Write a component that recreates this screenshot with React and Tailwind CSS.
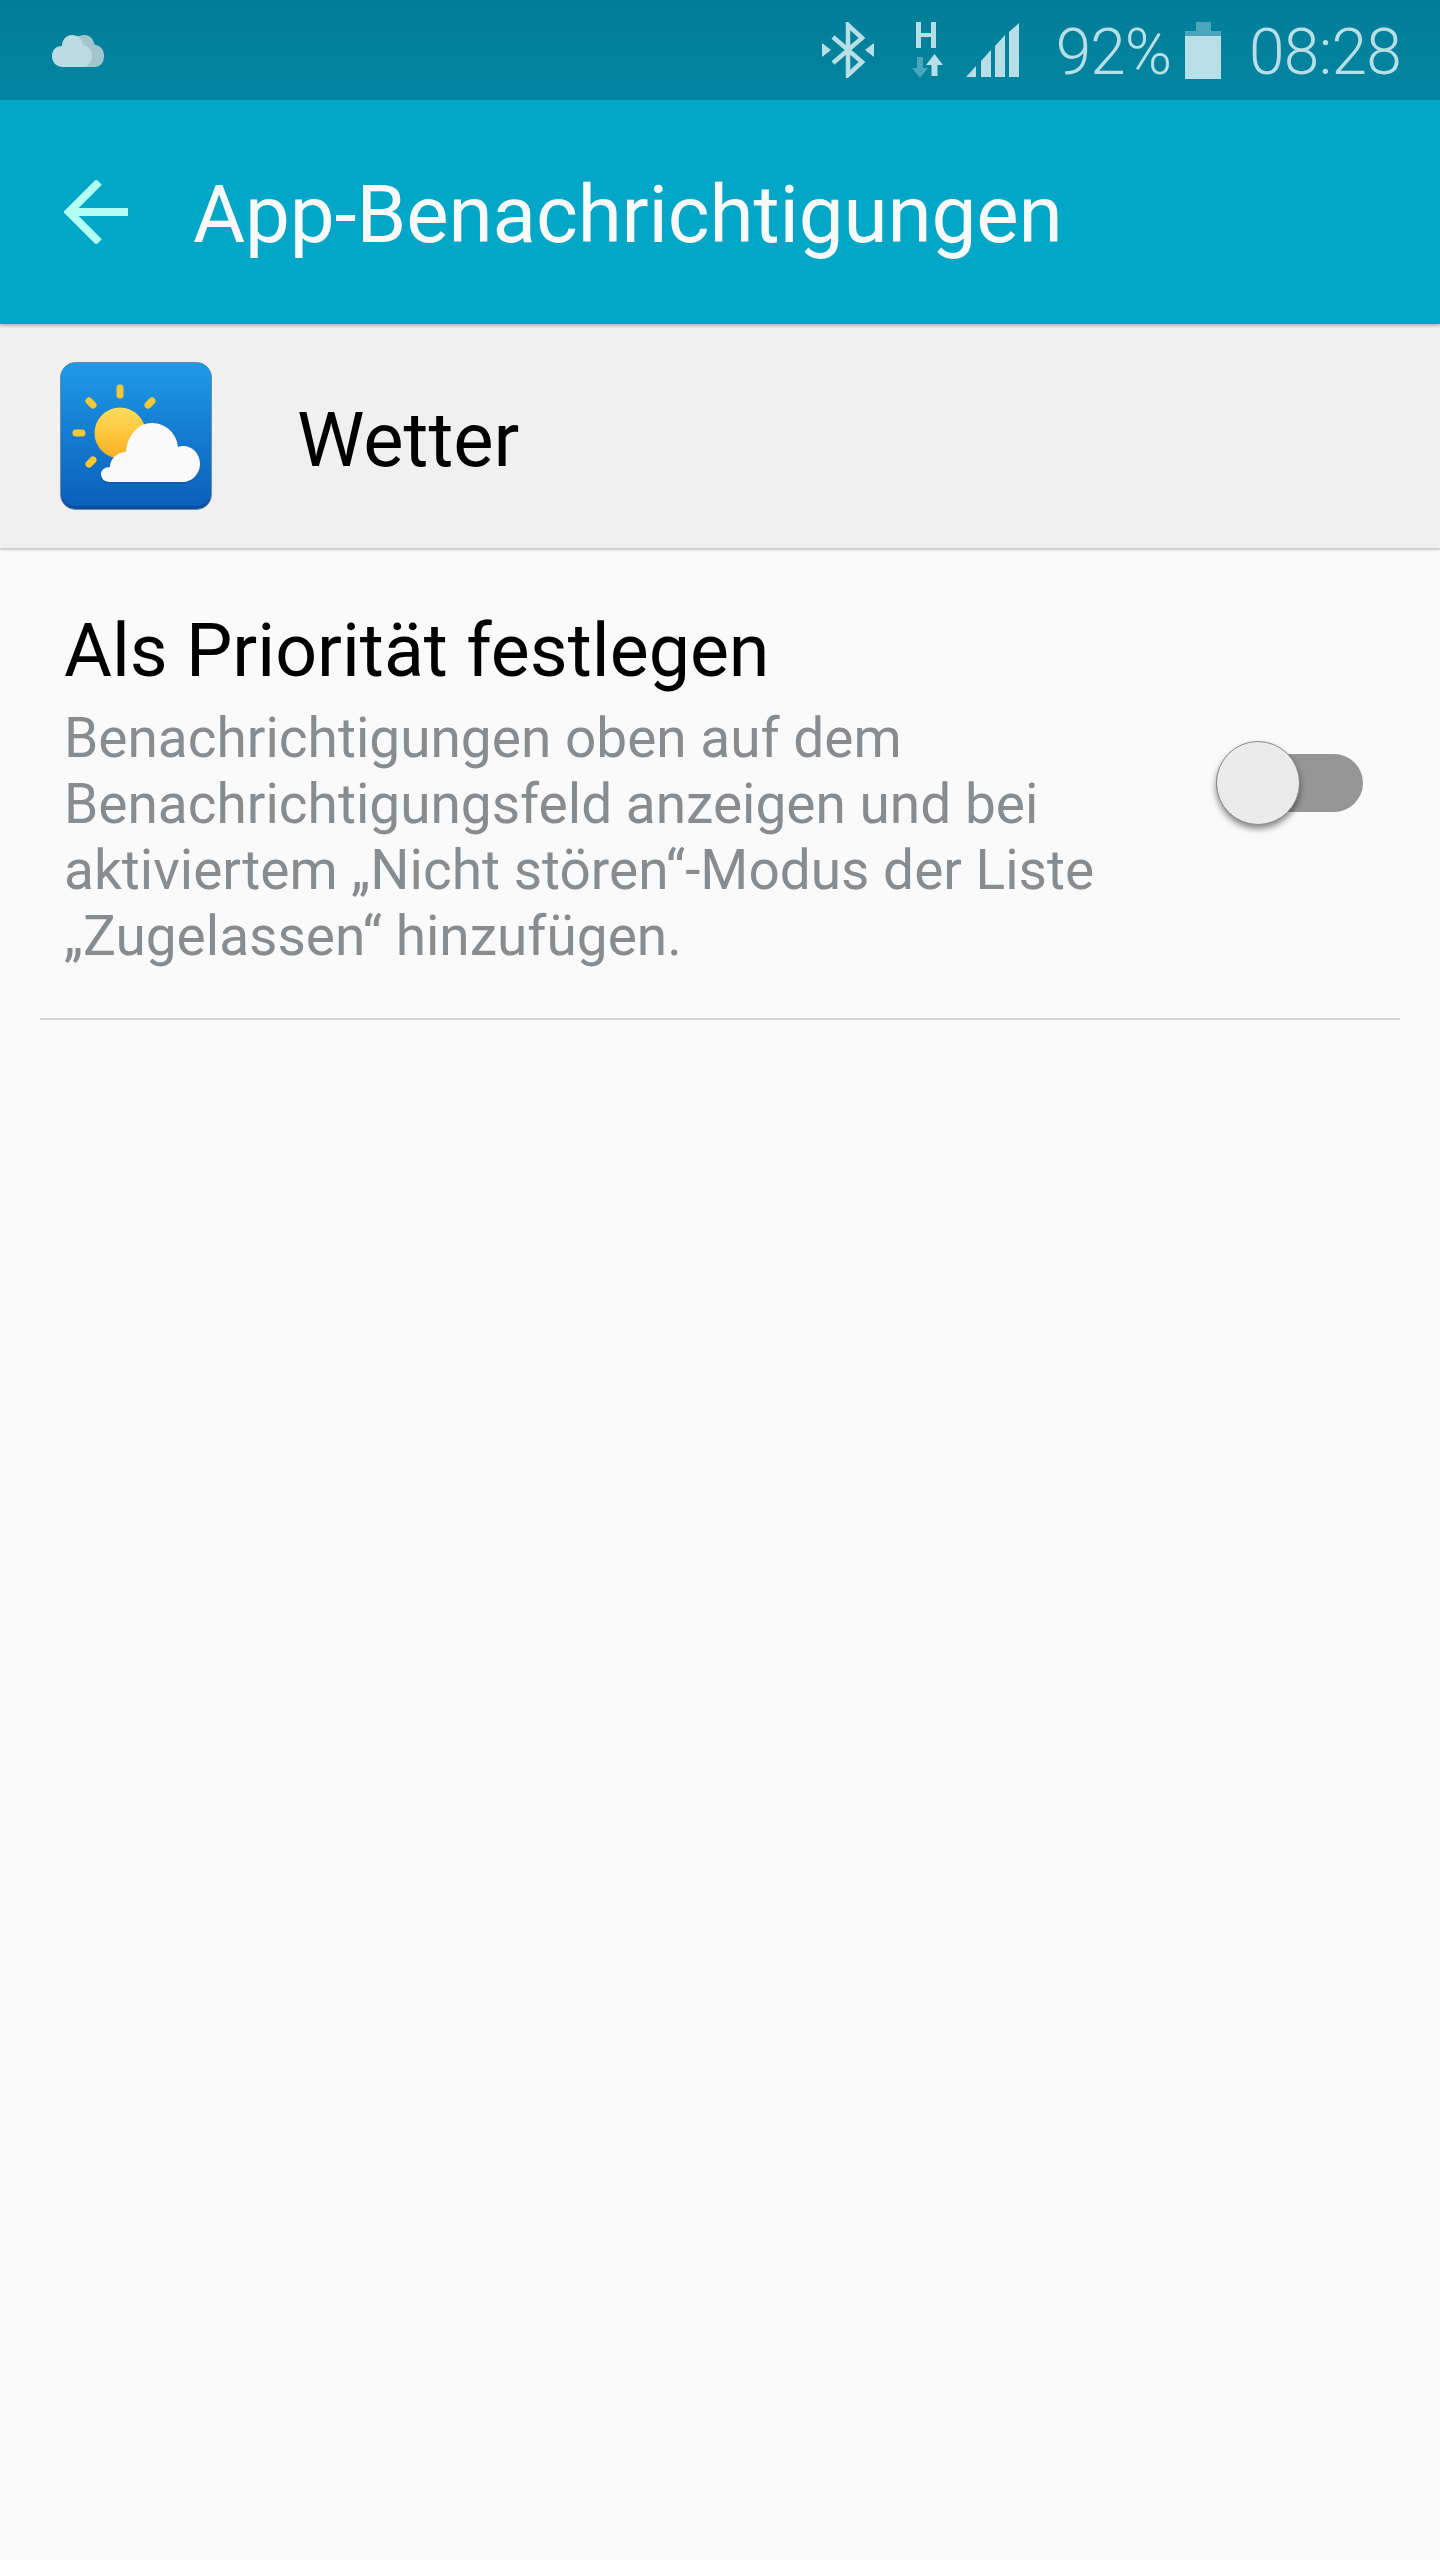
const ICON = '#b9dfe6';
const ICON_DIM = '#4aa6bd';

function CloudNotification() {
  return (
    <svg width="52" height="32" viewBox="0 0 52 32">
      <path d="M32 0c5 0 9 3 10 8l1 2c5 0 9 4 9 11 0 7-4 11-9 11H24V2c3-1 5-2 8-2z" fill="#a3c6cd" />
      <path d="M20 0c6 0 10 4 11 10 5 1 9 5 9 11 0 6-4 11-10 11H11C5 32 0 28 0 21c0-6 4-10 10-10 0-6 4-11 10-11z" fill="#b9dde3" />
    </svg>
  );
}

function Bluetooth() {
  return (
    <svg width="52" height="56" viewBox="0 0 52 56" fill="none">
      <path d="M11 15 L40 40 L26 53 V3 L40 16 L11 41" stroke={ICON} strokeWidth="4.5" />
      <path d="M0 21 L9 28 L0 35Z M52 21 L43 28 L52 35Z" fill={ICON} />
    </svg>
  );
}

function DataIndicator() {
  return (
    <svg width="31" height="56" viewBox="0 0 31 56">
      <path d="M4 0h5v11h10V0h5v26h-5V15H9v11H4z" fill={ICON} />
      <path d="M5 35h6v11h5L8 56 0 46h5z" fill={ICON_DIM} />
      <path d="M22.5 32L31 43h-5.500v11h-6V43H14z" fill={ICON} />
    </svg>
  );
}

function Signal() {
  return (
    <svg width="54" height="54" viewBox="0 0 54 54" fill={ICON}>
      <path d="M0 54 L10 43 V54Z" />
      <path d="M15 38 L25 27 V54 H15Z" />
      <path d="M29 23 L39 12 V54 H29Z" />
      <path d="M43 9 L53 0 V54 H43Z" />
    </svg>
  );
}

function Battery() {
  return (
    <svg width="36" height="57" viewBox="0 0 36 57">
      <path d="M11 0h15v9H11z" fill={ICON_DIM} />
      <path d="M0 9h36v5H0z" fill={ICON_DIM} />
      <path d="M0 14h36v43H0z" fill={ICON} />
    </svg>
  );
}

function WeatherIcon() {
  return (
    <svg width="152" height="148" viewBox="0 0 152 148">
      <defs>
        <linearGradient id="sky" x1="0" y1="0" x2="0" y2="1">
          <stop offset="0" stopColor="#1e9ae6" />
          <stop offset="1" stopColor="#0b5fbb" />
        </linearGradient>
        <linearGradient id="sun" x1="0" y1="0" x2="0" y2="1">
          <stop offset="0" stopColor="#ffdd5c" />
          <stop offset="1" stopColor="#fbb01f" />
        </linearGradient>
      </defs>
      <rect x="0.5" y="0.5" width="151" height="147" rx="15" fill="#0a4f9c" stroke="#6f8aa5" />
      <rect x="1" y="1" width="150" height="143" rx="14" fill="url(#sky)" />
      <g fill="none" stroke="#fcc834" strokeWidth="7" strokeLinecap="round">
        <path d="M60 26v7" />
        <path d="M29 39l4 4" />
        <path d="M92 39l-4 4" />
        <path d="M16 71h6" />
        <path d="M29 102l4-4" />
      </g>
      <circle cx="60" cy="71" r="25.500" fill="url(#sun)" />
      <path d="M50 122c-5 0-9-3-9-8 0-4 4-7 9-7 0-8 7-15 16-15 1-16 12-29 26-29 14 0 25 11 26 24 2-1 4-1 5-1 10 0 17 8 17 18 0 10-8 18-17 18z" fill="#0a4f9c" opacity="0.45" />
      <path d="M50 120c-5 0-9-3-9-8 0-4 4-7 9-7 0-8 7-15 16-15 1-16 12-29 26-29 14 0 25 11 26 24 2-1 4-1 5-1 10 0 17 8 17 18 0 10-8 18-17 18z" fill="#fafafa" />
    </svg>
  );
}

export default function App() {
  return (
    <div className="w-[1440px] h-[2560px] bg-[#fafafa] flex flex-col font-['Roboto',sans-serif]">
      <div className="h-[100px] shrink-0 bg-gradient-to-b from-[#027d98] to-[#0285a1] flex items-center justify-between pl-[52px] pr-[39px]">
        <div className="pt-[2px]"><CloudNotification /></div>
        <div className="flex items-center text-[#b9dfe6] font-light text-[64px] leading-none">
          <div className="mr-[38px]"><Bluetooth /></div>
          <div className="mr-[23px]"><DataIndicator /></div>
          <div className="mr-[36px]"><Signal /></div>
          <span className="tracking-[-1px] mr-[14px] pt-[5px]">92%</span>
          <div className="mr-[28px]"><Battery /></div>
          <span className="tracking-[-0.7px] pt-[5px]">08:28</span>
        </div>
      </div>

      <div className="h-[224px] shrink-0 bg-[#02a6c6] flex items-center shadow-[0_2px_3px_rgba(0,0,0,0.25)] relative z-10">
        <svg className="ml-[64px]" width="64" height="64" viewBox="0 0 64 64" fill="none" stroke="#b2fff3" strokeWidth="8">
          <path d="M64 32H4" />
          <path d="M35 2 L5 32 L35 62" />
        </svg>
        <h1 className="ml-[65px] pt-[6px] text-[80px] tracking-[-0.15px] leading-none text-[#fafafa] font-normal">App-Benachrichtigungen</h1>
      </div>

      <div className="h-[224px] shrink-0 bg-[#f0f0f0] flex items-center pl-[60px] shadow-[0_2px_2px_rgba(0,0,0,0.2)]">
        <WeatherIcon />
        <span className="ml-[85px] pt-[8px] text-[76px] leading-none text-black">Wetter</span>
      </div>

      <div className="mx-[40px] border-b-2 border-[#d4d4d4] h-[472px] flex items-center">
        <div className="flex-1 pl-[24px] pt-[12px]">
          <div className="text-[73.5px] leading-[84px] text-black">Als Priorität festlegen</div>
          <div className="text-[55px] leading-[66px] text-[#898c8e] mt-[12px] w-[1080px]">
            Benachrichtigungen oben auf dem Benachrichtigungsfeld anzeigen und bei aktiviertem „Nicht stören“-Modus der Liste „Zugelassen“ hinzufügen.
          </div>
        </div>
        <div className="relative w-[147px] h-[58px] bg-[#969696] rounded-full mr-[37px] ml-[-40px] shrink-0">
          <div className="absolute left-0 top-[-13px] w-[84px] h-[84px] rounded-full bg-[#ebebeb] border border-[#8a8a8a] shadow-[0_4px_6px_rgba(0,0,0,0.45)]" />
        </div>
      </div>
    </div>
  );
}
